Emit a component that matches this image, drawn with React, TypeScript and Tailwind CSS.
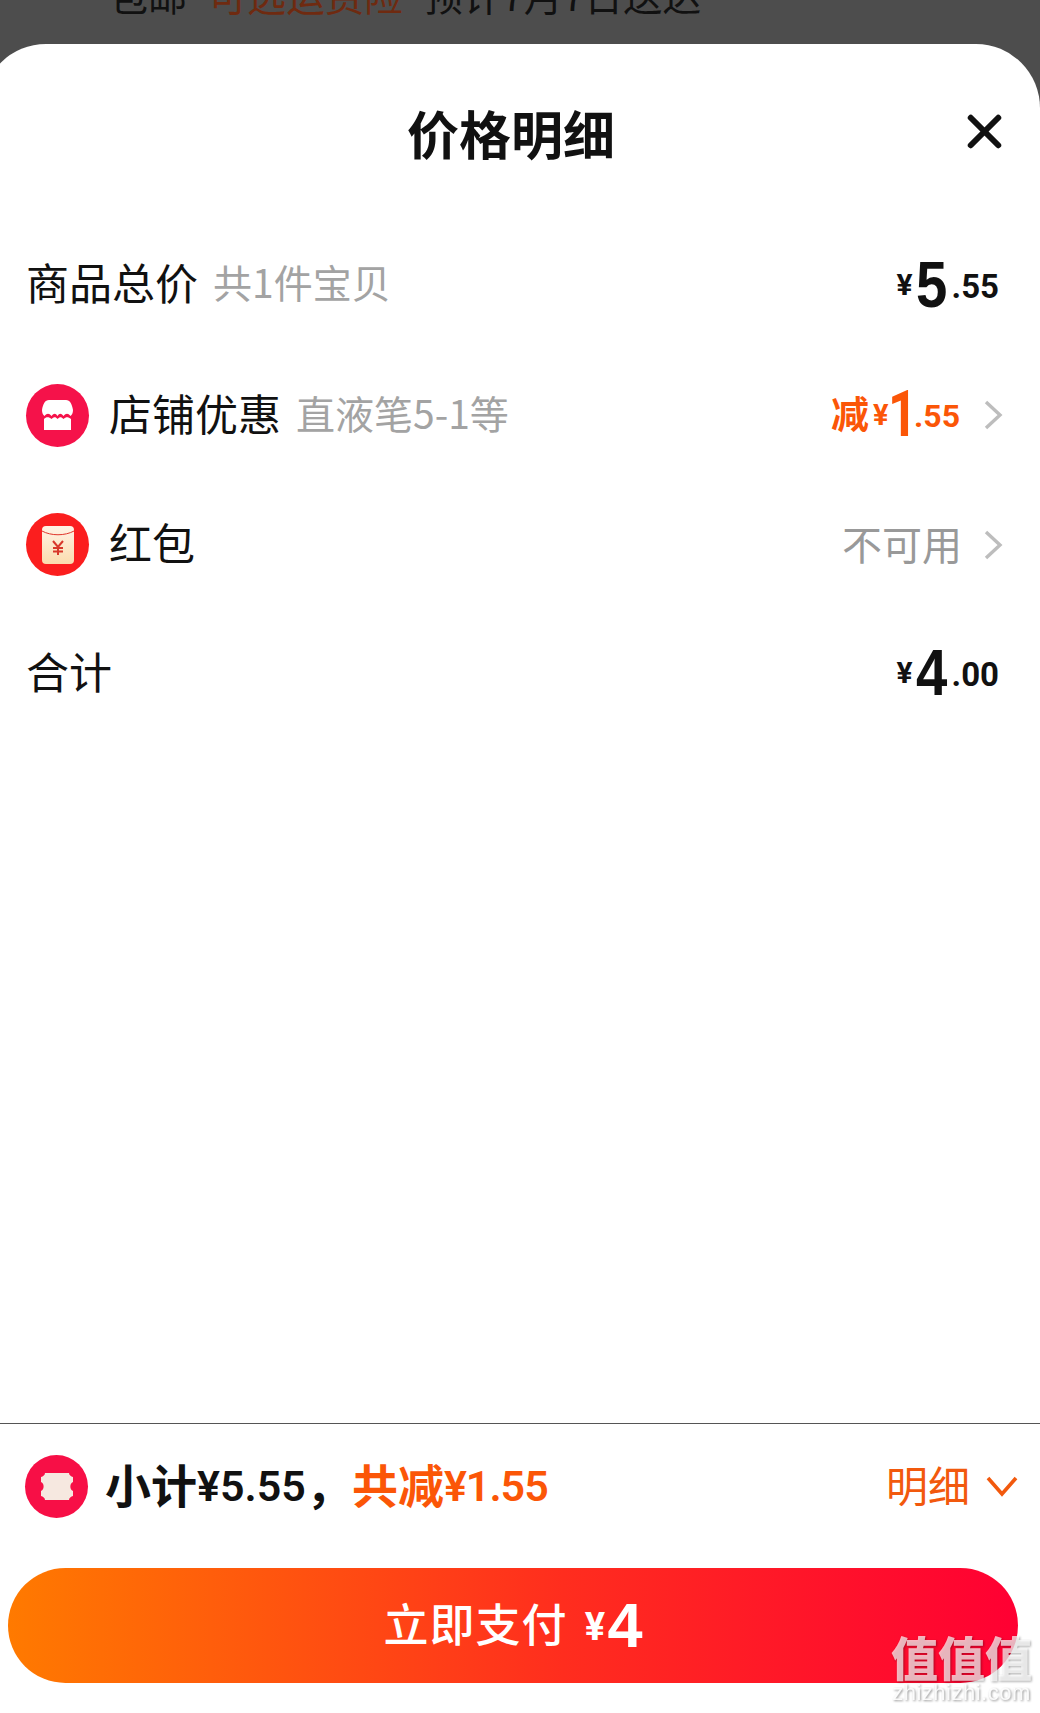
import React from "react";
import { X } from "lucide-react";

const cjk = "font-['Noto_Sans_CJK_SC','Noto_Sans',sans-serif]";
const num = "font-['Roboto','Liberation_Sans',sans-serif]";
const wide = "font-['Liberation_Sans',sans-serif]";

const ShopIcon = () => (
  <div className="flex h-[63px] w-[63px] shrink-0 items-center justify-center rounded-full bg-[#f5124a]">
    <svg width="31" height="30" viewBox="0 0 31 30">
      <path d="M7 0H24C28 0 30 4 31 10C31 13 30 15 28.5 16C26 13 24 13 21.5 16C19 13 17.5 13 15.5 16C13.5 13 12 13 9.5 16C7 13 5 13 2.5 16C1 15 0 13 0 10C1 4 3 0 7 0Z" fill="#fff" />
      <path d="M2 19C4 16.5 7 16.5 9.5 19C12 16.5 13.5 16.5 15.5 19C18 16.5 19 16.5 21.5 19C24 16.5 26 16.5 29 19V30H2Z" fill="#fff" />
    </svg>
  </div>
);

const PacketIcon = () => (
  <div className="flex h-[63px] w-[63px] shrink-0 items-center justify-center rounded-full bg-[#fb1e1e]">
    <svg width="32" height="38" viewBox="0 0 32 38">
      <defs>
        <linearGradient id="packet" x1="0" y1="0" x2="0" y2="1">
          <stop offset="0" stopColor="#fff3e6" />
          <stop offset="1" stopColor="#fbdcae" />
        </linearGradient>
      </defs>
      <rect width="32" height="38" rx="4" fill="url(#packet)" />
      <path d="M0 5C9 10 23 10 32 5" stroke="#e0352a" strokeWidth="1" fill="none" />
      <path d="M11 15L16 21L21 15M16 21V29M11 22H21M11 25.5H21" stroke="#d8382b" strokeWidth="2" fill="none" />
    </svg>
  </div>
);

const TicketIcon = () => (
  <div className="flex h-[63px] w-[63px] shrink-0 items-center justify-center rounded-full bg-[#f70f46]">
    <svg width="34" height="27" viewBox="0 0 34 27">
      <path d="M5 0H29C29 2 31 3.5 33 4V9C29.5 10 29.5 17 33 18V23C31 23.5 29 25 29 27H5C5 25 3 23.5 1 23V18C4.5 17 4.5 10 1 9V4C3 3.5 5 2 5 0Z" fill="#f6e8e0" />
    </svg>
  </div>
);

const Arrow = () => (
  <svg className="ml-[24px] shrink-0" width="19" height="30" viewBox="0 0 19 30">
    <path d="M2 2L16 15L2 28" stroke="#bdbdbd" strokeWidth="3.4" fill="none" />
  </svg>
);

const Price = ({ big, small }: { big: string; small: string }) => (
  <div className="flex items-center font-bold text-[#111]">
    <span className={`w-[19px] text-[30px] leading-none ${num}`}>¥</span>
    <span className={`w-[36px] origin-left scale-x-[.88] text-[64px] leading-none ${wide}`}>{big}</span>
    <span className={`mt-[3px] text-[33px] leading-none ${num}`}>{small}</span>
  </div>
);

export default function App() {
  return (
    <div className={`flex h-[1713px] w-[1040px] flex-col overflow-hidden bg-[#4d4d4d] ${cjk}`}>
      <div className="h-[44px] shrink-0 overflow-hidden pl-[109px]">
        <p className="-mt-[32px] whitespace-pre text-[39px] leading-[52px] text-[#111]">
          包邮<span className="mx-[21px] text-[#6f2a10]">可选运费险</span>预计7月7日送达
        </p>
      </div>

      <div className="relative -ml-[18px] flex w-[1058px] flex-1 flex-col rounded-t-[64px] bg-white">
        <header className="relative flex h-[176px] shrink-0 justify-center pt-[54px]">
          <h1 className="text-[52px] font-bold leading-[70px] text-[#111]">价格明细</h1>
          <X className="absolute right-[28px] top-[60px] h-[55px] w-[55px] text-[#111]" strokeWidth={2.6} />
        </header>

        <div className="flex h-[130px] shrink-0 items-center justify-between pl-[44px] pr-[41px]">
          <div className="flex items-center pb-[7px] text-[43px] text-[#111]">
            商品总价
            <span className="ml-[15px] text-[39px] text-[#a3a3a3]">共1件宝贝</span>
          </div>
          <Price big="5" small=".55" />
        </div>

        <div className="flex h-[130px] shrink-0 items-center justify-between pl-[44px] pr-[37px]">
          <div className="flex items-center text-[43px] text-[#111]">
            <ShopIcon />
            <span className="ml-[20px] pb-[6px]">店铺优惠</span>
            <span className="ml-[15px] pb-[6px] text-[39px] text-[#a3a3a3]">直液笔5-1等</span>
          </div>
          <div className="flex items-center font-bold text-[#fb5607]">
            <span className="pb-[6px] text-[38px] leading-none">减</span>
            <span className={`ml-[4px] w-[15px] text-[29px] leading-none ${num}`}>¥</span>
            <span className={`w-[26px] origin-left scale-x-[.8] text-[64px] leading-none ${num}`}>1</span>
            <span className={`mt-[2px] text-[32px] leading-none ${num}`}>.55</span>
            <Arrow />
          </div>
        </div>

        <div className="flex h-[129px] shrink-0 items-center justify-between pl-[44px] pr-[37px]">
          <div className="flex items-center text-[43px] text-[#111]">
            <PacketIcon />
            <span className="ml-[20px] pb-[6px]">红包</span>
          </div>
          <div className="flex items-center">
            <span className="-mr-[2px] pb-[4px] text-[40px] text-[#999]">不可用</span>
            <Arrow />
          </div>
        </div>

        <div className="flex h-[128px] shrink-0 items-center justify-between pl-[44px] pr-[41px]">
          <span className="pb-[6px] text-[43px] text-[#111]">合计</span>
          <Price big="4" small=".00" />
        </div>

        <div className="flex-1" />

        <div className="h-[1px] shrink-0 bg-[#555]" />

        <div className="flex h-[144px] shrink-0 items-center justify-between pb-[20px] pl-[43px] pr-[22px]">
          <div className="flex items-center text-[46px] font-semibold text-[#111]">
            <TicketIcon />
            <span className="ml-[17px] pb-[6px]">小计</span>
            <span className={`text-[43px] ${num}`}>¥5.55</span>
            <span className="pb-[6px]">，</span>
            <span className="pb-[6px] text-[#fb5607]">共减</span>
            <span className={`text-[43px] tracking-[-1px] text-[#fb5607] ${num}`}>¥1.55</span>
          </div>
          <div className="flex items-center text-[42px] text-[#f2590d]">
            <span className="pb-[6px]">明细</span>
            <svg className="ml-[16px]" width="32" height="22" viewBox="0 0 32 22">
              <path d="M2 3L16 19L30 3" stroke="#f2590d" strokeWidth="3.6" fill="none" />
            </svg>
          </div>
        </div>

        <button className="ml-[26px] flex h-[115px] w-[1010px] shrink-0 items-center justify-center rounded-full bg-linear-to-r/srgb from-[#ff7a00] via-[#ff2d1e] via-55% to-[#ff0033] text-white">
          <span className="pb-[6px] text-[45px] font-medium tracking-[1px]">立即支付</span>
          <span className={`ml-[15px] mt-[4px] w-[25px] text-[38px] font-bold ${num}`}>¥</span>
          <span className={`${wide} text-[63px] font-bold leading-none`}>4</span>
        </button>

        <div className="h-[30px] shrink-0" />

        <div className="absolute bottom-[8px] right-[8px] flex flex-col items-center drop-shadow-[1px_1px_1px_rgba(0,0,0,0.45)]">
          <span className="text-[47px] font-black leading-[50px] text-white/70">值值值</span>
          <span className={`${wide} text-[22px] leading-[24px] tracking-[0.5px] text-white/90`}>zhizhizhi.com</span>
        </div>
      </div>
    </div>
  );
}
